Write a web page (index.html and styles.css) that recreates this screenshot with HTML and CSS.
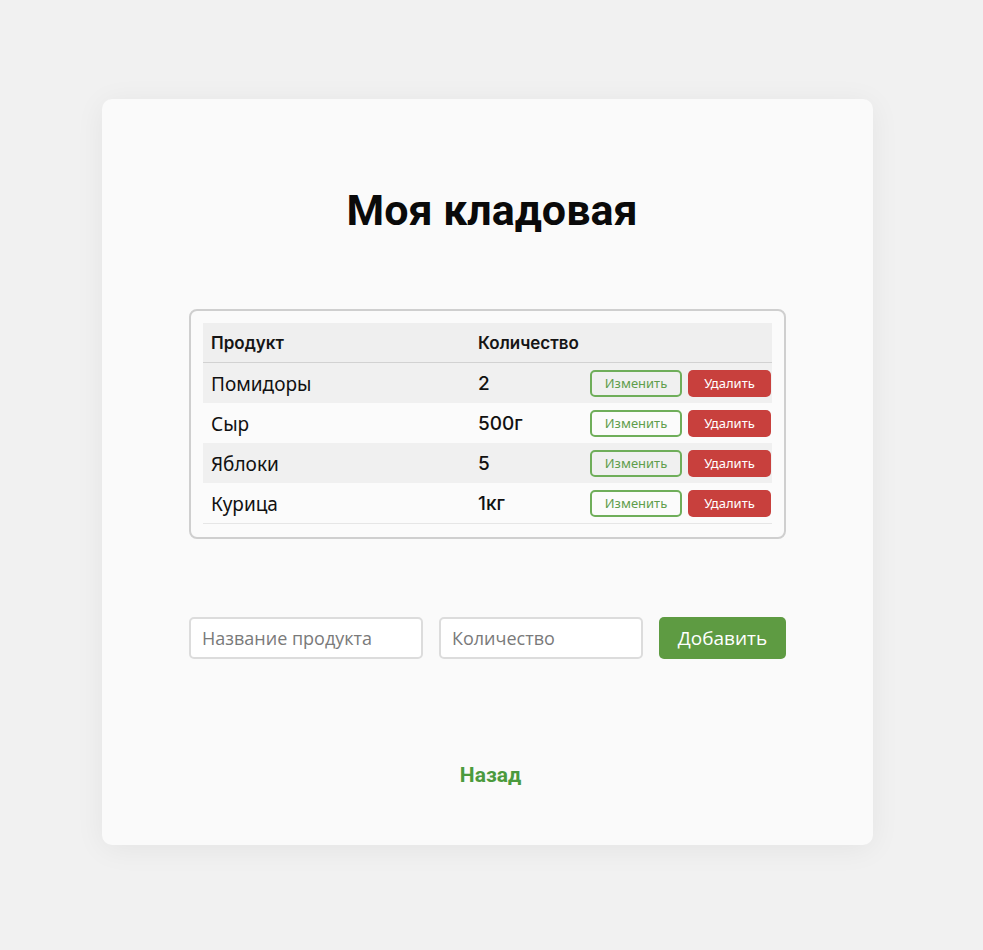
FILE: index.html
```html
<!DOCTYPE html>
<html lang="ru">
<head>
<meta charset="utf-8">
<title>Моя кладовая</title>
<link rel="stylesheet" href="styles.css">
</head>
<body>
<main class="card">
  <h1 class="title">Моя кладовая</h1>
  <section class="table-box">
    <table class="pantry">
      <thead>
        <tr><th class="col-name">Продукт</th><th class="col-qty">Количество</th><th class="col-act"></th></tr>
      </thead>
      <tbody>
        <tr class="odd"><td class="name">Помидоры</td><td class="qty">2</td><td class="act"><button class="btn-edit">Изменить</button><button class="btn-del">Удалить</button></td></tr>
        <tr class="even"><td class="name">Сыр</td><td class="qty">500г</td><td class="act"><button class="btn-edit">Изменить</button><button class="btn-del">Удалить</button></td></tr>
        <tr class="odd"><td class="name">Яблоки</td><td class="qty">5</td><td class="act"><button class="btn-edit">Изменить</button><button class="btn-del">Удалить</button></td></tr>
        <tr class="even"><td class="name">Курица</td><td class="qty">1кг</td><td class="act"><button class="btn-edit">Изменить</button><button class="btn-del">Удалить</button></td></tr>
      </tbody>
    </table>
  </section>
  <form class="add-form">
    <input class="in-name" type="text" placeholder="Название продукта">
    <input class="in-qty" type="text" placeholder="Количество">
    <button class="btn-add" type="button">Добавить</button>
  </form>
  <div class="back-wrap"><a class="back" href="#">Назад</a></div>
</main>
</body>
</html>
```

FILE: styles.css
```css
html, body {
  margin: 0;
  padding: 0;
}
body {
  background: #f1f1f1;
  font-family: "Noto Sans", "Open Sans", sans-serif;
  color: #111;
  padding-top: 99px;
  padding-bottom: 105px;
}
.card {
  width: 771px;
  box-sizing: border-box;
  margin-left: 102px;
  background: #fafafa;
  border-radius: 10px;
  box-shadow: 0 4px 30px rgba(0,0,0,0.06);
  padding: 86px 87px 57px 87px;
}
.title {
  margin: 0;
  font-family: Roboto, "Liberation Sans", sans-serif;
  font-weight: 700;
  font-size: 43px;
  line-height: 50px;
  text-align: center;
  color: #0a0a0a;
  padding-left: 9px;
}
.table-box {
  margin-top: 74px;
  border: 2px solid #cfcfcf;
  border-radius: 8px;
  padding: 12px 12px 13px 12px;
  background: #fbfbfb;
}
.pantry {
  width: 100%;
  border-collapse: collapse;
}
.pantry th {
  height: 39px;
  background: #efefef;
  border-bottom: 1px solid #d2d2d2;
  text-align: left;
  font-family: Inter, Roboto, "Liberation Sans", sans-serif;
  font-weight: 600;
  font-size: 17px;
  color: #151515;
  padding: 0;
}
.col-name { width: 267px; padding-left: 8px !important; box-sizing: border-box; }
.col-qty { width: 112px; padding-left: 8px !important; }
.pantry td {
  height: 40px;
  padding: 0;
}
.pantry tr.odd td { background: #f0f0f0; }
.pantry tr.even td { background: #fbfbfb; }
.pantry tbody tr:last-child td { border-bottom: 1px solid #e6e6e6; }
.pantry td.name {
  height: 38px;
  padding-left: 8px;
  padding-top: 2px;
  font-size: 19px;
  color: #111;
}
.pantry td.qty {
  padding-left: 8px;
  font-family: Inter, Roboto, "Liberation Sans", sans-serif;
  font-weight: 500;
  font-size: 19px;
  color: #111;
}
.pantry td.act {
  text-align: right;
  white-space: nowrap;
  padding-right: 1px;
}
.btn-edit, .btn-del {
  height: 27px;
  box-sizing: border-box;
  border-radius: 5px;
  font-family: "Noto Sans", "Open Sans", sans-serif;
  font-size: 13px;
  vertical-align: middle;
  cursor: pointer;
  padding: 0;
}
.btn-edit {
  width: 92px;
  background: transparent;
  border: 2px solid #6fae5a;
  color: #5f9e4c;
}
.btn-del {
  width: 83px;
  margin-left: 6px;
  background: #c8403d;
  border: none;
  color: #fff;
}
.add-form {
  margin-top: 78px;
  display: flex;
  gap: 16px;
  height: 42px;
}
.add-form input {
  box-sizing: border-box;
  height: 42px;
  border: 2px solid #dcdcdc;
  border-radius: 5px;
  background: #fff;
  padding: 0 11px;
  font-family: "Open Sans", "Noto Sans", sans-serif;
  font-size: 18px;
  color: #333;
}
.add-form input::placeholder { color: #7a7a7a; }
.in-name { width: 234px; }
.in-qty { width: 204px; }
.btn-add {
  width: 127px;
  height: 42px;
  border: none;
  border-radius: 5px;
  background: #5e9b42;
  color: #fff;
  font-family: "Open Sans", "Noto Sans", sans-serif;
  font-size: 19px;
  cursor: pointer;
}
.back-wrap {
  margin-top: 104px;
  text-align: center;
  line-height: 24px;
}
.back {
  font-family: Roboto, "Liberation Sans", sans-serif;
  font-weight: 700;
  font-size: 21px;
  color: #4b9a3d;
  text-decoration: none;
  margin-left: 6px;
}
```
